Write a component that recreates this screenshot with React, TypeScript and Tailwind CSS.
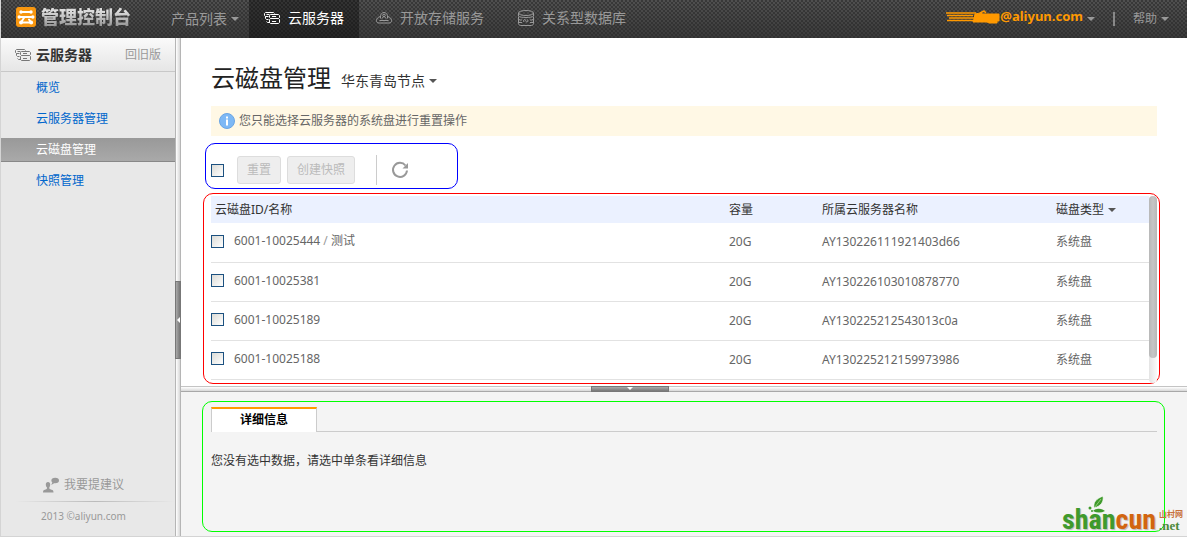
import React from "react";

const disks = [
  { id: "6001-10025444", name: "测试", size: "20G", server: "AY130226111921403d66", type: "系统盘" },
  { id: "6001-10025381", name: "", size: "20G", server: "AY130226103010878770", type: "系统盘" },
  { id: "6001-10025189", name: "", size: "20G", server: "AY130225212543013c0a", type: "系统盘" },
  { id: "6001-10025188", name: "", size: "20G", server: "AY130225212159973986", type: "系统盘" },
];

const menu = [
  { label: "概览", active: false },
  { label: "云服务器管理", active: false },
  { label: "云磁盘管理", active: true },
  { label: "快照管理", active: false },
];

function Caret({ className = "" }: { className?: string }) {
  return (
    <svg className={"h-1 w-2 shrink-0 " + className} viewBox="0 0 8 4" fill="currentColor" aria-hidden="true">
      <path d="M0 0h8L4 4z" />
    </svg>
  );
}

function LogoIcon() {
  return (
    <svg className="size-5 shrink-0" viewBox="0 0 20 20" aria-hidden="true">
      <rect width="20" height="20" rx="3" fill="#f7960f" />
      <g fill="none" stroke="#fff" strokeWidth="2" strokeLinecap="round">
        <path d="M5 5h10M3 10h14M8.500 10L5 15.500M5 15.500h9M13 12.500l2.500 3.500" />
      </g>
      <g fill="#fff">
        <circle cx="5" cy="5" r="1.700" />
        <circle cx="15" cy="5" r="1.700" />
        <circle cx="3.200" cy="10" r="1.700" />
        <circle cx="16.800" cy="10" r="1.700" />
        <circle cx="5" cy="15.500" r="1.900" />
        <circle cx="15.200" cy="15.500" r="1.900" />
      </g>
    </svg>
  );
}

function ServerIcon() {
  return (
    <svg className="h-3 w-4 shrink-0" viewBox="0 0 16 12" fill="none" stroke="currentColor" aria-hidden="true">
      <path d="M.500 1.500l1-1h8l1 1M.500 1.500v2l1 1h3M2.500 2.500h3M1.500 4.500v2l1 1h2M2.500 9.500l1 1h2.500" />
      <path d="M6.500 2.500h8l1 1v2l-1 1h-8l-1-1v-2zM6.500 6.500l-1 1v3l1 1h8l1-1v-3l-1-1M8 4.500h4M8 9.500h4" />
    </svg>
  );
}

function StorageIcon() {
  return (
    <svg className="h-3 w-4 shrink-0" viewBox="0 0 16 12" fill="none" stroke="currentColor" aria-hidden="true">
      <path d="M4.500 4.500C2 5 .500 6.500 .500 8.500s1 2.500 2.500 2.500h10c1.500 0 2.500-.500 2.500-2.500s-1.500-3.500-4-4" />
      <path d="M4.500 6.500V3.500C5 1.500 6.500.500 8 .500s3 1 3.500 3v3M3.500 8.500h9M6 6.500l1.500-2M10 6.500l-1.500-2" />
      <circle cx="8" cy="3.500" r="1.200" />
    </svg>
  );
}

function DatabaseIcon() {
  return (
    <svg className="size-4 shrink-0" viewBox="0 0 16 16" fill="none" stroke="currentColor" aria-hidden="true">
      <ellipse cx="8" cy="3" rx="7.500" ry="2.500" />
      <path d="M.500 3v3c1 1 3.500 1.500 7.500 1.500s6.500-.500 7.500-1.500V3M.500 6.500V9l1.500 1h2M15.500 6.500V9l-1.500 1h-2M.500 9v4.500c0 1 1 2 2 2h11c1 0 2-1 2-2V9M1 12.500h3M15 12.500h-3" />
      <path d="M6 12c-1-1-.500-2.500.800-2.500s.700 2.500 2 2.500 1.200-1.500.700-2.500" />
    </svg>
  );
}

function FeedbackIcon() {
  return (
    <svg className="h-4 w-4 shrink-0" viewBox="0 0 16 16" fill="currentColor" aria-hidden="true">
      <path d="M5 5c1.500 0 2.200 1 2.200 2.500S6.500 10 6.300 10.500c0 1.500.400 1.700 2.200 2.200 1.500.400 2 1 2 2.800H0c0-1.800.500-2.400 2-2.800 1.700-.500 2-.700 2-2.200-.500-.500-1.200-1.500-1.200-3S3.500 5 5 5z" />
      <ellipse cx="12.200" cy="3.500" rx="3.800" ry="2.800" />
      <path d="M9.500 5L8.300 8l3.200-2z" />
    </svg>
  );
}

function Check({ label }: { label: string }) {
  return (
    <input
      type="checkbox"
      aria-label={label}
      className="block size-[13px] shrink-0 appearance-none border border-[#1c5180] bg-linear-to-br from-[#dcdcd7] to-white checked:bg-[#1c5180]"
    />
  );
}

function NavItem({ icon, label, active = false }: { icon: React.ReactNode; label: string; active?: boolean }) {
  return (
    <a
      href="#"
      className={
        active
          ? "flex items-center gap-2 bg-black/35 px-[15px] pb-0.5 text-white"
          : "flex items-center gap-2 px-[17px] pb-0.5 text-[#999]"
      }
    >
      {icon}
      <span>{label}</span>
    </a>
  );
}

function Header() {
  return (
    <header className="flex h-[38px] shrink-0 bg-[radial-gradient(circle_at_1px_1px,#282828_0.5px,transparent_1px),radial-gradient(circle_at_3px_3px,#282828_0.5px,transparent_1px),linear-gradient(#505050,#3a3a3a)] bg-size-[4px_4px,4px_4px,auto] text-sm whitespace-nowrap">
      <a href="#" className="flex items-center gap-[5px] pb-1 pl-[15px]">
        <LogoIcon />
        <span className="bg-linear-to-b from-[#dcdcdc] from-30% to-[#808080] bg-clip-text text-lg font-black text-transparent">管理控制台</span>
      </a>
      <nav className="flex pl-10" aria-label="产品">
        <button type="button" className="flex items-center gap-1 pr-[10px] text-[#999]">
          产品列表
          <Caret />
        </button>
        <NavItem icon={<ServerIcon />} label="云服务器" active />
        <NavItem icon={<StorageIcon />} label="开放存储服务" />
        <NavItem icon={<DatabaseIcon />} label="关系型数据库" />
      </nav>
      <div className="ml-auto flex items-center pr-[18px] text-xs text-[#999]">
        <button type="button" className="flex items-center gap-1">
          <span className="flex items-center pb-1 text-[13px] font-bold text-[#ff9900]">
            <svg className="h-3.5 w-[54px]" viewBox="0 0 54 14" fill="none" stroke="currentColor" aria-hidden="true">
              <path fill="currentColor" d="M29 4l5-1 3 1h16v7h-2v2h-8l-2-1h-14l1-3z" />
              <path strokeWidth="1.500" d="M0 3h30M1 5.500h26M3 8h26M1 10.500h30M34 3l4-2 2 2" />
            </svg>
            @aliyun.com
          </span>
          <Caret />
        </button>
        <span className="mr-[18px] ml-[18px] h-3.5 w-0.5 bg-[#888]" />
        <button type="button" className="flex items-center gap-1">
          帮助
          <Caret />
        </button>
      </div>
    </header>
  );
}

function Sidebar() {
  return (
    <aside className="flex w-[174px] shrink-0 flex-col bg-[#e8e8e8]">
      <div className="flex h-[34px] items-center border-b border-[#c8c8c8] bg-linear-to-b from-[#fafafa] to-[#e6e6e6] px-3.5 text-[#777]">
        <ServerIcon />
        <h2 className="ml-[5px] text-sm font-bold text-[#333]">云服务器</h2>
        <a href="#" className="ml-auto text-xs text-[#999]">回旧版</a>
      </div>
      <nav className="flex flex-col gap-[7px] pt-1 text-xs" aria-label="云服务器">
        {menu.map((m) => (
          <a
            key={m.label}
            href="#"
            className={
              m.active
                ? "h-6 border-b border-[#888] bg-linear-to-b from-[#999] to-[#a9a9a9] pl-[35px] leading-6 text-white"
                : "h-6 pl-[35px] leading-6 text-[#0066cc]"
            }
          >
            {m.label}
          </a>
        ))}
      </nav>
      <footer className="mt-auto pb-3 text-[#999]">
        <a href="#" className="flex items-center gap-[5px] pb-1.5 pl-[42px] text-xs leading-5">
          <FeedbackIcon />
          我要提建议
        </a>
        <div className="ml-3.5 h-px bg-linear-to-r from-transparent via-[#bbb] to-transparent" />
        <p className="pt-1.5 pl-10 text-[10px] leading-4">2013 ©aliyun.com</p>
      </footer>
    </aside>
  );
}

function SideSplitter() {
  return (
    <div className="flex w-1.5 shrink-0 flex-col border-x border-x-[#b5b5b5] bg-linear-to-r from-white to-[#d8d8d8] pt-[243px]">
      <button type="button" aria-label="收起菜单" className="-mx-px flex h-[78px] items-center justify-center border border-[#777] bg-linear-to-r from-[#aaa] to-[#777]">
        <svg className="h-1.5 w-[3px]" viewBox="0 0 3 6" fill="#fff" aria-hidden="true">
          <path d="M3 0v6L0 3z" />
        </svg>
      </button>
    </div>
  );
}

function BottomSplitter() {
  return (
    <div className="flex h-1.5 shrink-0 justify-center border-y border-t-[#c4c4c4] border-b-[#a8a8a8] bg-linear-to-b from-white to-[#d8d8d8] pr-[108px]">
      <button type="button" aria-label="收起详情" className="-my-px flex h-1.5 w-[78px] items-center justify-center border border-[#777] bg-linear-to-b from-[#aaa] to-[#777]">
        <svg className="h-[3px] w-1.5 shrink-0" viewBox="0 0 6 3" fill="#fff" aria-hidden="true">
          <path d="M0 0h6L3 3z" />
        </svg>
      </button>
    </div>
  );
}

function DiskTable() {
  return (
    <div className="mt-1 mr-[5px] flex rounded-[10px] border border-[#ff0000] pt-0.5 pr-0.5 pb-[3px] pl-[7px]">
      <table className="min-w-0 flex-1 table-fixed border-collapse text-left text-xs">
        <thead>
          <tr className="h-[27px] bg-[#ebf1ff] text-[#333]">
            <th className="p-0 pl-1 font-normal">云磁盘ID/名称</th>
            <th className="w-[93px] p-0 font-normal">容量</th>
            <th className="w-[234px] p-0 font-normal">所属云服务器名称</th>
            <th className="w-[93px] p-0 font-normal">
              <button type="button" className="flex items-center gap-1">
                磁盘类型
                <Caret className="text-[#555]" />
              </button>
            </th>
          </tr>
        </thead>
        <tbody>
          {disks.map((d) => (
            <tr key={d.id} className="h-[39px] border-b border-[#e2e2e2] text-[#666]">
              <td className="p-0">
                <div className="flex items-center gap-2.5 pb-0.5">
                  <Check label={d.id} />
                  <span>
                    {d.id}
                    {d.name && (
                      <>
                        <span className="text-[#999]"> / </span>
                        {d.name}
                      </>
                    )}
                  </span>
                </div>
              </td>
              <td className="p-0">{d.size}</td>
              <td className="p-0">{d.server}</td>
              <td className="p-0">{d.type}</td>
            </tr>
          ))}
        </tbody>
      </table>
      <div className="-mb-[3px] w-2 rounded-full bg-linear-to-r from-[#e4e4e4] to-[#fafafa]">
        <div className="h-[162px] rounded-full bg-linear-to-r from-[#b8b8b8] via-[#c6c6c6] to-[#b8b8b8]" />
      </div>
    </div>
  );
}

function Watermark() {
  return (
    <div className="absolute right-1 bottom-0 flex h-10 items-end gap-[3px]">
      <svg className="absolute top-0 left-6 h-5 w-5" viewBox="0 0 20 20" aria-hidden="true">
        <path d="M8 12C7 6 10 3 17 0c1 6-2 10-9 12z" fill="#3f9a2c" stroke="#fff" strokeWidth=".7" />
        <path d="M9 11l6-8" stroke="#a6d78b" strokeWidth=".8" />
        <path d="M7 15c3-3 8-3 12 0-4 2-8 2-12 0z" fill="#3f9a2c" />
        <circle cx="4" cy="12" r="1.500" fill="#3f9a2c" />
        <circle cx="6" cy="15" r="1" fill="#3f9a2c" />
      </svg>
      <span className="font-['Liberation_Sans_Narrow','Roboto_Condensed',Roboto,sans-serif] text-[28px] leading-8 font-bold text-[#3f9a2c] [text-shadow:1px_1px_1px_#bbb]">
        shan<span className="text-[#d2650f]">cun</span>
      </span>
      <span className="flex flex-col pb-1 font-['Liberation_Serif','Noto_Sans_CJK_SC',serif] font-bold">
        <span className="text-[8px] leading-2.5 text-[#c8713a]">山村网</span>
        <span className="text-[13px] leading-3 text-[#4d8a3a]">.net</span>
      </span>
    </div>
  );
}

export default function App() {
  return (
    <div className="flex min-h-screen flex-col border-b border-l border-[#d4d4d4] bg-white font-['Noto_Sans','Noto_Sans_CJK_SC',sans-serif] text-[#333]">
      <Header />
      <div className="flex flex-1">
        <Sidebar />
        <SideSplitter />
        <main className="flex min-w-0 flex-1 flex-col">
          <section className="px-[22px] pt-5 pb-0.5">
            <div className="flex items-center gap-2.5 pl-2">
              <h1 className="text-2xl leading-10 text-[#222]">云磁盘管理</h1>
              <button type="button" className="flex items-center gap-1 pt-1.5 text-sm">
                华东青岛节点
                <Caret className="text-[#555]" />
              </button>
            </div>
            <div className="mx-2 mt-2 flex h-[30px] items-center gap-1 bg-[#fff8e5] pl-2 text-xs text-[#666]">
              <svg className="size-4" viewBox="0 0 16 16" aria-hidden="true">
                <circle cx="8" cy="8" r="7.500" fill="#7db8f5" stroke="#6aa5e4" />
                <path d="M7 3.500h2v2H7zM7 6.500h2v6H7z" fill="#fff" />
              </svg>
              您只能选择云服务器的系统盘进行重置操作
            </div>
            <div className="mt-[7px] ml-0.5 flex h-[46px] w-[253px] items-center rounded-[10px] border border-[#0000ff] pt-2 pl-[5px] text-xs">
              <Check label="全选" />
              <button type="button" disabled className="ml-[13px] h-7 w-11 rounded-[3px] border border-[#ddd] bg-[#eee] text-[#bbb]">
                重置
              </button>
              <button type="button" disabled className="ml-1.5 h-7 w-[68px] rounded-[3px] border border-[#ddd] bg-[#eee] text-[#bbb]">
                创建快照
              </button>
              <span className="ml-[21px] h-[30px] w-px bg-[#ccc]" />
              <button type="button" aria-label="刷新" className="ml-3.5 text-[#999]">
                <svg className="size-[18px]" viewBox="0 0 18 18" fill="none" aria-hidden="true">
                  <path d="M14.500 4.500A7 7 0 1 0 16 9.500" stroke="currentColor" strokeWidth="2" />
                  <path d="M17 2v5.500h-5.500z" fill="currentColor" />
                </svg>
              </button>
            </div>
            <DiskTable />
          </section>
          <BottomSplitter />
          <section className="relative flex-1 bg-[#f4f4f4] pt-[9px] pr-[22px] pb-1 pl-[21px]">
            <div className="min-h-[131px] rounded-[10px] border border-[#00ff00] pt-[5px] pr-[7px] pl-2 text-xs">
              <div role="tablist" className="flex border-b border-[#ccc]">
                <button
                  type="button"
                  role="tab"
                  aria-selected="true"
                  className="-mb-px h-[25px] w-[106px] border-x border-t-2 border-x-[#ccc] border-t-[#ff9900] bg-white font-bold text-black"
                >
                  详细信息
                </button>
              </div>
              <p role="tabpanel" className="pt-5 leading-4.5">您没有选中数据，请选中单条看详细信息</p>
            </div>
            <Watermark />
          </section>
        </main>
      </div>
    </div>
  );
}
